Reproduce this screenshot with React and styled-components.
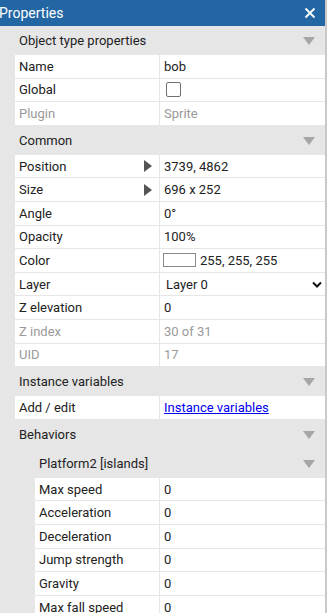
import styled, { createGlobalStyle } from "styled-components";

const Global = createGlobalStyle`
  html, body {
    margin: 0;
    padding: 0;
    background: #c9c9c9;
    overflow: hidden;
  }
  body {
    font-family: Roboto, "Liberation Sans", sans-serif;
    font-size: 13px;
    color: #222;
  }
`;

const sections = [
  {
    title: "Object type properties",
    rows: [
      { label: "Name", value: "bob" },
      { label: "Global", kind: "checkbox" },
      { label: "Plugin", value: "Sprite", disabled: true },
    ],
  },
  {
    title: "Common",
    rows: [
      { label: "Position", value: "3739, 4862", expand: true },
      { label: "Size", value: "696 x 252", expand: true },
      { label: "Angle", value: "0°" },
      { label: "Opacity", value: "100%" },
      { label: "Color", value: "255, 255, 255", kind: "color" },
      { label: "Layer", value: "Layer 0", kind: "select" },
      { label: "Z elevation", value: "0" },
      { label: "Z index", value: "30 of 31", disabled: true },
      { label: "UID", value: "17", disabled: true },
    ],
  },
  {
    title: "Instance variables",
    rows: [{ label: "Add / edit", value: "Instance variables", kind: "link" }],
  },
  {
    title: "Behaviors",
    rows: [],
    children: [
      {
        title: "Platform2 [islands]",
        rows: [
          { label: "Max speed", value: "0" },
          { label: "Acceleration", value: "0" },
          { label: "Deceleration", value: "0" },
          { label: "Jump strength", value: "0" },
          { label: "Gravity", value: "0" },
          { label: "Max fall speed", value: "0" },
        ],
      },
    ],
  },
];

const Section = ({ section, indent }) => (
  <>
    <Header $indent={indent}>
      <span>{section.title}</span>
      <DownArrow />
    </Header>
    {section.rows.map((row) => (
      <Row key={row.label} $indent={indent}>
        <Label $indent={indent} $disabled={row.disabled}>
          {row.label}
          {row.expand && <RightArrow />}
        </Label>
        <Value $disabled={row.disabled}>{renderValue(row)}</Value>
      </Row>
    ))}
    {section.children &&
      section.children.map((child) => (
        <Section key={child.title} section={child} indent={indent + 20} />
      ))}
  </>
);

const renderValue = (row) => {
  if (row.kind === "checkbox") return <Checkbox />;
  if (row.kind === "color")
    return (
      <>
        <Swatch />
        {row.value}
      </>
    );
  if (row.kind === "select")
    return (
      <SelectBox>
        <span>{row.value}</span>
        <svg width="10" height="7" viewBox="0 0 10 7">
          <path d="M1 1.5 L5 5.5 L9 1.5" fill="none" stroke="#111" strokeWidth="2" />
        </svg>
      </SelectBox>
    );
  if (row.kind === "link") return <LinkText href="#">{row.value}</LinkText>;
  return row.value;
};

const App = () => {
  return (
    <>
      <Global />
      <Panel>
        <TitleBar>
          <Title>Properties</Title>
          <svg width="12" height="12" viewBox="0 0 12 12">
            <path d="M1.5 1.5 L10.5 10.5 M10.5 1.5 L1.5 10.5" stroke="#fff" strokeWidth="1.8" />
          </svg>
        </TitleBar>
        {sections.map((s) => (
          <Section key={s.title} section={s} indent={15} />
        ))}
      </Panel>
    </>
  );
};

export default App;

const Panel = styled.div`
  width: 325px;
  height: 613px;
  background: #e6e6e6;
  overflow: hidden;
`;

const TitleBar = styled.div`
  height: 26px;
  background: #2366a4;
  color: #fff;
  display: flex;
  align-items: center;
  justify-content: space-between;
  padding-right: 9px;
  box-sizing: border-box;
  svg {
    display: block;
  }
`;

const Title = styled.div`
  font-size: 14px;
  margin-left: -1px;
`;

const Header = styled.div`
  height: 29px;
  display: flex;
  align-items: center;
  justify-content: space-between;
  padding-left: ${(p) => p.$indent + 4}px;
  padding-right: 10px;
  box-sizing: border-box;
  color: #222;
`;

const DownArrow = styled.span`
  width: 0;
  height: 0;
  border-left: 6px solid transparent;
  border-right: 6px solid transparent;
  border-top: 8px solid #a6a6a6;
  margin-top: 1px;
`;

const Row = styled.div`
  height: 23.6px;
  margin-left: ${(p) => p.$indent}px;
  display: flex;
  background: #fff;
  border-bottom: 1px solid #e6e6e6;
  box-sizing: border-box;
  &:last-child {
    border-bottom: none;
  }
`;

const Label = styled.div`
  width: ${(p) => 160 - p.$indent}px;
  flex: none;
  box-sizing: border-box;
  padding-left: 4px;
  padding-right: 7px;
  border-right: 1px solid #e6e6e6;
  display: flex;
  align-items: center;
  justify-content: space-between;
  color: ${(p) => (p.$disabled ? "#9a9a9a" : "#222")};
`;

const RightArrow = styled.span`
  width: 0;
  height: 0;
  border-top: 6px solid transparent;
  border-bottom: 6px solid transparent;
  border-left: 8px solid #555;
`;

const Value = styled.div`
  flex: 1;
  min-width: 0;
  display: flex;
  align-items: center;
  padding-left: 4px;
  color: ${(p) => (p.$disabled ? "#9a9a9a" : "#222")};
`;

const Checkbox = styled.span`
  width: 13px;
  height: 13px;
  border: 1px solid #707070;
  border-radius: 2px;
  margin-left: 2px;
  background: #fff;
`;

const Swatch = styled.span`
  width: 31px;
  height: 12px;
  border: 1px solid #8a8a8a;
  background: #fff;
  margin-left: -1px;
  margin-right: 4px;
`;

const SelectBox = styled.div`
  flex: 1;
  display: flex;
  align-items: center;
  justify-content: space-between;
  padding-left: 2px;
  padding-right: 3px;
`;

const LinkText = styled.a`
  color: #0000ee;
  text-decoration: underline;
`;
